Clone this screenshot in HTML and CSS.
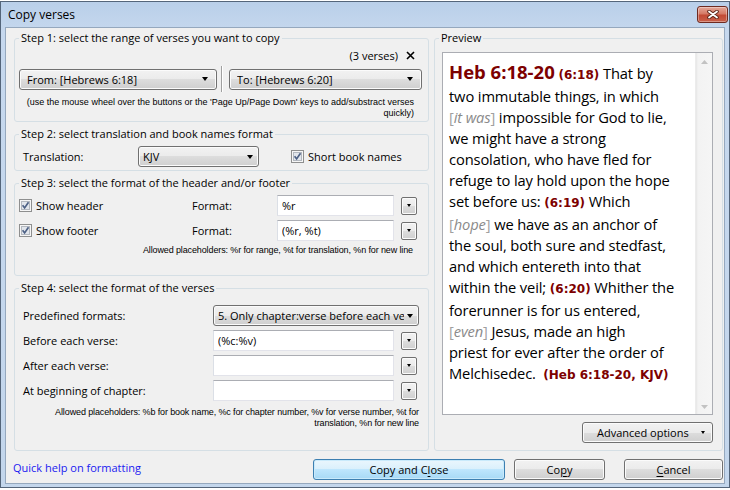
FILE: index.html
```html
<!DOCTYPE html>
<html lang="en">
<head>
    <meta charset="UTF-8">
    <title>Copy verses</title>
    <link rel="stylesheet" href="styles.css">
</head>
<body>
<div class="window">
    <div class="titlebar">
        <span class="title">Copy verses</span>
        <div class="close-btn">
            <svg width="12" height="9" viewBox="0 0 12 9"><path d="M2 1.5l8 6M10 1.5l-8 6" stroke="#5a2418" stroke-width="3.6" stroke-linecap="round"/><path d="M2 1.5l8 6M10 1.5l-8 6" stroke="#fff" stroke-width="1.8" stroke-linecap="round"/></svg>
        </div>
    </div>
    <div class="client">
        <div class="main">
            <div class="steps">
                <fieldset class="group step1">
                    <legend>Step 1: select the range of verses you want to copy</legend>
                    <div class="verse-count">
                        <span>(3 verses)</span>
                        <svg class="clear" width="9" height="9" viewBox="0 0 9 9"><path d="M1 1l7 7M8 1L1 8" stroke="#000" stroke-width="1.6"/></svg>
                    </div>
                    <div class="range-row">
                        <div class="combo range-from"><span>From: [Hebrews 6:18]</span><i class="caret"></i></div>
                        <div class="vsep"></div>
                        <div class="combo range-to"><span>To: [Hebrews 6:20]</span><i class="caret"></i></div>
                    </div>
                    <div class="note hint">(use the mouse wheel over the buttons or the 'Page Up/Page Down' keys to add/substract verses<br>quickly)</div>
                </fieldset>

                <fieldset class="group step2">
                    <legend>Step 2: select translation and book names format</legend>
                    <div class="row">
                        <span class="label translation-label">Translation:</span>
                        <div class="combo translation"><span>KJV</span><i class="caret"></i></div>
                        <label class="checkbox short-names">
                            <svg width="13" height="13" viewBox="0 0 13 13"><rect x="0.5" y="0.5" width="12" height="12" fill="#f6f6f6" stroke="#8e8f8f"/><rect x="2.5" y="2.5" width="8" height="8" fill="#e2e6ec" stroke="#b3b8bf"/><path d="M3.6 6.3l2 2.6 3.9-5.6" fill="none" stroke="#4d6185" stroke-width="1.7"/></svg>
                            <span>Short book names</span>
                        </label>
                    </div>
                </fieldset>

                <fieldset class="group step3">
                    <legend>Step 3: select the format of the header and/or footer</legend>
                    <div class="format-row first">
                        <label class="checkbox">
                            <svg width="13" height="13" viewBox="0 0 13 13"><rect x="0.5" y="0.5" width="12" height="12" fill="#f6f6f6" stroke="#8e8f8f"/><rect x="2.5" y="2.5" width="8" height="8" fill="#e2e6ec" stroke="#b3b8bf"/><path d="M3.6 6.3l2 2.6 3.9-5.6" fill="none" stroke="#4d6185" stroke-width="1.7"/></svg>
                            <span>Show header</span>
                        </label>
                        <span class="label">Format:</span>
                        <input class="field" type="text" value="%r">
                        <div class="drop-btn"><i class="caret small"></i></div>
                    </div>
                    <div class="format-row">
                        <label class="checkbox">
                            <svg width="13" height="13" viewBox="0 0 13 13"><rect x="0.5" y="0.5" width="12" height="12" fill="#f6f6f6" stroke="#8e8f8f"/><rect x="2.5" y="2.5" width="8" height="8" fill="#e2e6ec" stroke="#b3b8bf"/><path d="M3.6 6.3l2 2.6 3.9-5.6" fill="none" stroke="#4d6185" stroke-width="1.7"/></svg>
                            <span>Show footer</span>
                        </label>
                        <span class="label">Format:</span>
                        <input class="field" type="text" value="(%r, %t)">
                        <div class="drop-btn"><i class="caret small"></i></div>
                    </div>
                    <div class="note step3-note">Allowed placeholders: %r for range, %t for translation, %n for new line</div>
                </fieldset>

                <fieldset class="group step4">
                    <legend>Step 4: select the format of the verses</legend>
                    <div class="verse-row first">
                        <span class="label">Predefined formats:</span>
                        <div class="combo predefined"><span>5. Only chapter:verse before each verse</span><i class="caret"></i></div>
                    </div>
                    <div class="verse-row">
                        <span class="label">Before each verse:</span>
                        <input class="field" type="text" value="(%c:%v)">
                        <div class="drop-btn"><i class="caret small"></i></div>
                    </div>
                    <div class="verse-row">
                        <span class="label">After each verse:</span>
                        <input class="field" type="text" value="">
                        <div class="drop-btn"><i class="caret small"></i></div>
                    </div>
                    <div class="verse-row">
                        <span class="label">At beginning of chapter:</span>
                        <input class="field" type="text" value="">
                        <div class="drop-btn"><i class="caret small"></i></div>
                    </div>
                    <div class="note step4-note">Allowed placeholders: %b for book name, %c for chapter number, %v for verse number, %t for<br>translation, %n for new line</div>
                </fieldset>
            </div>

            <fieldset class="group preview">
                <legend>Preview</legend>
                <div class="preview-box">
                    <div class="preview-text">
                        <span class="ref">Heb 6:18-20</span> <span class="vnum">(6:18)</span> That by<br>
                        two immutable things, in which<br>
                        <span class="added">[<i>it was</i>]</span> impossible for God to lie,<br>
                        we might have a strong<br>
                        consolation, who have fled for<br>
                        refuge to lay hold upon the hope<br>
                        set before us: <span class="vnum">(6:19)</span> Which<br>
                        <span class="added">[<i>hope</i>]</span> we have as an anchor of<br>
                        the soul, both sure and stedfast,<br>
                        and which entereth into that<br>
                        within the veil; <span class="vnum">(6:20)</span> Whither the<br>
                        forerunner is for us entered,<br>
                        <span class="added">[<i>even</i>]</span> Jesus, made an high<br>
                        priest for ever after the order of<br>
                        Melchisedec.&nbsp; <span class="vnum">(Heb 6:18-20, KJV)</span>
                    </div>
                    <div class="scrollbar">
                        <svg width="7" height="4" viewBox="0 0 7 4"><path d="M3.5 0L7 4H0z" fill="#c2c2c2"/></svg>
                        <svg width="7" height="4" viewBox="0 0 7 4"><path d="M0 0h7L3.5 4z" fill="#c2c2c2"/></svg>
                    </div>
                </div>
                <div class="advanced-row">
                    <div class="btn advanced"><span>Advanced options</span><i class="caret small"></i></div>
                </div>
            </fieldset>
        </div>

        <div class="footer">
            <a class="help-link">Quick help on formatting</a>
            <div class="btn default copy-close">Copy and C<u>l</u>ose</div>
            <div class="btn copy">Co<u>p</u>y</div>
            <div class="btn cancel"><u>C</u>ancel</div>
        </div>
    </div>
</div>
</body>
</html>
```

FILE: styles.css
```css
* {
    box-sizing: border-box;
}
body {
    margin: 0;
    background: #fff;
    font-family: "Open Sans", sans-serif;
    font-size: 11px;
    color: #000;
}
.window {
    width: 730px;
    height: 487px;
    margin-top: 1px;
    border: 1px solid #54657a;
    background: linear-gradient(#b9cfe9, #c6d8ee 30px, #c3d6ec);
    padding: 0 4px 3px;
    display: flex;
    flex-direction: column;
}
.titlebar {
    height: 25px;
    margin: 0 -4px;
    padding-left: 7px;
    display: flex;
    align-items: center;
    justify-content: space-between;
}
.title {
    font-size: 12px;
    color: #000;
}
.close-btn {
    width: 31px;
    height: 17px;
    margin-right: 1px;
    border: 1px solid #6e2a20;
    border-radius: 3px;
    background: linear-gradient(#e4a899, #d57a66 45%, #c24a35 55%, #c8604a);
    box-shadow: inset 0 0 0 1px rgba(255, 255, 255, 0.35);
    display: flex;
    align-items: center;
    justify-content: center;
}
.client {
    height: 457px;
    border: 1px solid #95a8be;
    background: #f0f0f0;
    display: flex;
    flex-direction: column;
}
.main {
    display: grid;
    grid-template-columns: 415px 289px;
    column-gap: 5px;
    padding: 2px 1px 0 8px;
    height: 423px;
}
.steps {
    display: flex;
    flex-direction: column;
    gap: 4px;
}
.group {
    margin: 0;
    padding: 0;
    min-width: 0;
    border: 1px solid #d5dfe5;
    border-radius: 3px;
}
.group legend {
    margin-left: 4px;
    padding: 0 2px;
    font-size: 11px;
    line-height: 16px;
}
.step1 { height: 92px; }
.step2 { height: 45px; }
.step3 { height: 101px; }
.step4 { height: 171px; }
.preview { height: 421px; }

.note {
    font-family: "Liberation Sans", Arial, sans-serif;
    font-size: 9px;
    line-height: 11px;
    text-align: right;
    color: #000;
}

/* step 1 */
.verse-count {
    height: 16px;
    margin-top: 1px;
    padding-right: 13px;
    display: flex;
    justify-content: flex-end;
    align-items: center;
    gap: 8px;
}
.range-row {
    margin-top: 3px;
    padding-left: 4px;
    display: flex;
    align-items: center;
}
.vsep {
    width: 2px;
    height: 26px;
    margin: 0 6px 0 4px;
    border-left: 1px solid #a0a0a0;
    border-right: 1px solid #fff;
}
.range-from { width: 198px; }
.range-to { width: 193px; }
.hint {
    margin-top: 5px;
    padding-right: 14px;
}

/* combo boxes and buttons */
.combo, .btn, .drop-btn {
    height: 21px;
    border: 1px solid #707070;
    border-radius: 3px;
    background: linear-gradient(#f2f2f2, #ebebeb 50%, #dddddd 50%, #cfcfcf);
    box-shadow: inset 0 0 0 1px #fbfbfb;
}
.combo {
    display: flex;
    align-items: center;
    padding: 0 8px 0 7px;
    white-space: nowrap;
}
.combo span {
    flex: 1;
    min-width: 0;
    overflow: hidden;
}
.caret {
    display: block;
    width: 1px;
    height: 0;
    border-top: 4px solid #000;
    border-left: 3px solid transparent;
    border-right: 3px solid transparent;
    flex: none;
}
.caret.small {
    border-top-width: 3px;
    border-left-width: 2px;
    border-right-width: 2px;
}
.drop-btn {
    width: 16px;
    height: 18px;
    border-radius: 2px;
    display: flex;
    align-items: center;
    justify-content: center;
}
.field {
    height: 21px;
    margin: 0;
    padding: 0 4px;
    font-family: "Open Sans", sans-serif;
    font-size: 11px;
    color: #000;
    background: #fff;
    border: 1px solid #e2e3ea;
    border-top-color: #abadb3;
    border-left-color: #dbdfe6;
    outline: none;
}
.checkbox {
    display: flex;
    align-items: center;
    gap: 4px;
}
.checkbox svg {
    flex: none;
}

/* step 2 */
.row {
    margin-top: 4px;
    padding-left: 8px;
    height: 21px;
    display: flex;
    align-items: center;
}
.translation-label {
    width: 115px;
}
.translation {
    width: 121px;
    padding: 0 5px 0 4px;
}
.short-names {
    margin-left: 32px;
}

/* step 3 */
.format-row {
    margin-top: 4px;
    padding-left: 4px;
    display: grid;
    grid-template-columns: 173px 85px 117px 16px;
    align-items: center;
}
.format-row .drop-btn {
    margin-left: 7px;
}
.format-row .field {
    width: 117px;
}
.step3-note {
    margin-top: 4px;
    padding-right: 15px;
    letter-spacing: -0.12px;
}

/* step 4 */
.verse-row {
    margin-top: 4px;
    padding-left: 8px;
    display: flex;
    align-items: center;
}
.verse-row.first {
    margin-top: 9px;
}
.verse-row .label {
    width: 190px;
}
.verse-row .field {
    width: 181px;
}
.verse-row .drop-btn {
    margin-left: 7px;
}
.predefined {
    width: 206px;
    padding: 0 5px 0 4px;
}
.predefined span {
    margin-right: 3px;
}
.step4-note {
    margin-top: 6px;
    padding-right: 9px;
    letter-spacing: -0.12px;
}

/* preview */
.preview-box {
    height: 363px;
    margin: 6px 9px 0 7px;
    border: 1px solid #abadb3;
    background: #fff;
    display: flex;
}
.preview-text {
    flex: 1;
    padding: 8px 0 0 6px;
    font-size: 14.7px;
    line-height: 21px;
    letter-spacing: -0.12px;
    white-space: nowrap;
    color: #000;
}
.ref {
    font-weight: 700;
    font-size: 18.5px;
    letter-spacing: 0;
    color: #7d0000;
}
.vnum {
    font-family: "DejaVu Sans", Verdana, sans-serif;
    font-weight: 700;
    font-size: 12px;
    letter-spacing: 0;
    color: #7d0000;
}
.added {
    color: #a0a0a0;
}
.added i {
    color: #8a8a8a;
}
.scrollbar {
    width: 17px;
    background: linear-gradient(to right, #e6e6e6, #f3f3f3 2px, #f5f5f5);
    border-left: 1px solid #ececec;
    display: flex;
    flex-direction: column;
    justify-content: space-between;
    align-items: center;
    padding: 7px 0 5px;
}
.scrollbar svg {
    display: block;
}
.advanced-row {
    margin: 7px 9px 0 0;
    display: flex;
    justify-content: flex-end;
}
.btn {
    display: flex;
    align-items: center;
    justify-content: center;
}
.advanced {
    width: 131px;
    justify-content: space-between;
    padding: 0 7px 0 14px;
}

/* footer */
.footer {
    flex: 1;
    padding: 8px 0 0 7px;
    display: flex;
    align-items: flex-start;
}
.help-link {
    margin-top: 1px;
    line-height: 16px;
    color: #1a1af0;
    cursor: pointer;
}
.copy-close {
    margin-left: auto;
    width: 192px;
}
.default {
    border-color: #3c7fb1;
    background: linear-gradient(#eaf6fd, #d9f0fc 50%, #bee6fd 50%, #a7d9f5);
    box-shadow: inset 0 0 0 1px #c9eafb;
}
.copy {
    width: 91px;
    margin-left: 9px;
}
.cancel {
    width: 99px;
    margin-left: 19px;
    margin-right: 1px;
}
u {
    text-decoration-thickness: 1px;
    text-underline-offset: 2px;
}
```
